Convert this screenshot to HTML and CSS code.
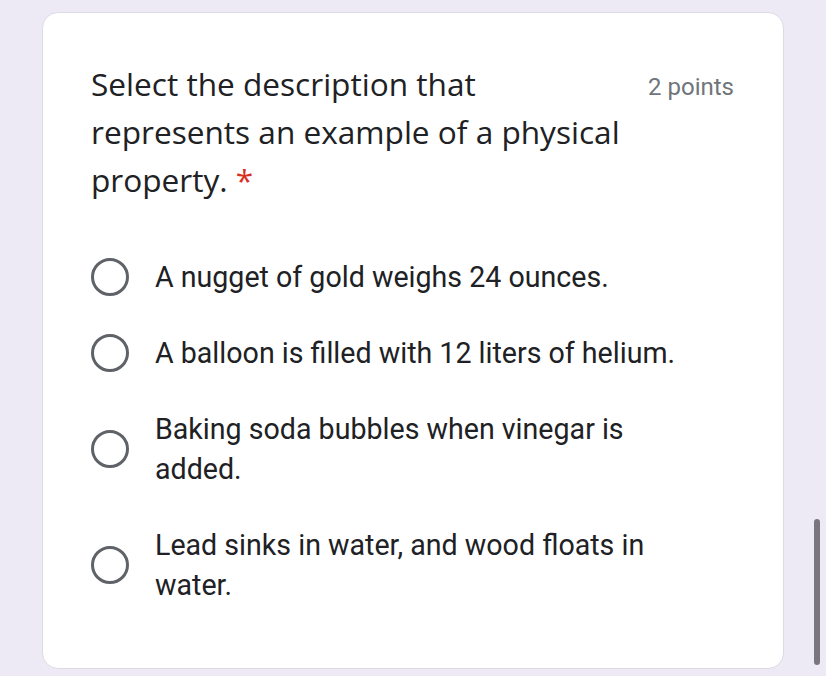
FILE: index.html
```html
<!DOCTYPE html>
<html>
<head>
<meta charset="utf-8">
<link rel="stylesheet" href="styles.css">
</head>
<body>
<div class="page">
  <div class="card">
    <div class="header">
      <div class="title">Select the description that represents an example of a physical property. <span class="req">*</span></div>
      <div class="points">2 points</div>
    </div>
    <div class="options">
      <div class="option"><span class="radio"></span><span class="label">A nugget of gold weighs 24 ounces.</span></div>
      <div class="option"><span class="radio"></span><span class="label">A balloon is filled with 12 liters of helium.</span></div>
      <div class="option"><span class="radio"></span><span class="label">Baking soda bubbles when vinegar is added.</span></div>
      <div class="option"><span class="radio"></span><span class="label">Lead sinks in water, and wood floats in water.</span></div>
    </div>
  </div>
  <div class="scrollbar"></div>
</div>
</body>
</html>
```
FILE: styles.css
```css
html, body {
  margin: 0;
  padding: 0;
  background: #edeaf5;
  width: 826px;
  height: 676px;
  overflow: hidden;
}
.page {
  position: relative;
  width: 826px;
  height: 676px;
  padding: 12px 0 0 42px;
  box-sizing: border-box;
}
.card {
  width: 742px;
  height: 657px;
  box-sizing: border-box;
  background: #ffffff;
  border: 1px solid #dcdae2;
  border-radius: 16px;
  padding: 47px 49px 0 48px;
}
.header {
  display: flex;
  justify-content: space-between;
  align-items: flex-start;
}
.title {
  width: 546px;
  font-family: "Open Sans", sans-serif;
  font-size: 31.6px;
  line-height: 48px;
  color: #202124;
}
.req {
  color: #d93025;
}
.points {
  font-family: Roboto, sans-serif;
  font-size: 24px;
  color: #70757a;
  line-height: 28px;
  margin-top: 13px;
}
.options {
  display: flex;
  flex-direction: column;
  gap: 36px;
  margin-top: 53px;
}
.option {
  display: flex;
  align-items: center;
  gap: 26px;
}
.radio {
  flex: none;
  width: 38px;
  height: 38px;
  box-sizing: border-box;
  border: 3.5px solid #5f6368;
  border-radius: 50%;
}
.label {
  width: 540px;
  font-family: Roboto, sans-serif;
  font-size: 28.6px;
  line-height: 40px;
  color: #202124;
}
.scrollbar {
  position: absolute;
  left: 814px;
  top: 519px;
  width: 6px;
  height: 146px;
  border-radius: 3px;
  background: #7b7580;
}
```
